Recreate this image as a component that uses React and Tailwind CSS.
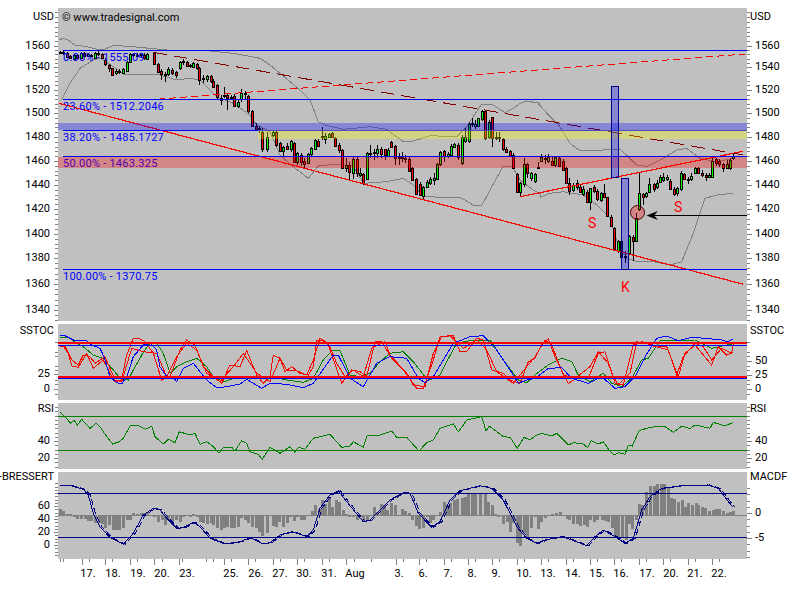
import React from 'react';

// zoomed-crop coordinates -> page coordinates
const toPage = (ox, oy, list) => list.map(([x, y]) => [ox + x / 3, oy + y / 3]);
const line = (points) => points.map(([x, y]) => `${x.toFixed(1)},${y.toFixed(1)}`).join(' ');
const joined = (...parts) => line(parts.flat());

const candles = [
  ...[
    [181,155,160,152,163,'g'],[190,156,160,153,164,'g'],[201,160,170,156,174,'r'],[211,168,175,165,178,'r'],[222,165,176,162,178,'g'],[232,165,175,163,178,'r'],[243,160,175,157,178,'g'],[252,158,167,155,172,'r'],[263,163,167,160,170,'g'],[274,165,168,162,172,'g'],[285,160,175,157,178,'g'],[295,158,163,154,168,'g'],[307,163,175,160,178,'r'],[316,180,193,175,197,'r'],[328,195,205,192,215,'r'],[337,205,224,203,227,'r'],[348,214,218,208,224,'g'],[358,214,217,208,222,'g'],[370,207,218,204,222,'g'],[380,186,212,184,216,'g'],[390,162,186,158,190,'g'],[400,162,165,158,170,'g'],[411,164,166,160,172,'g'],[422,162,165,158,170,'g'],[433,165,175,160,180,'r'],[442,163,177,160,180,'g'],[463,160,192,155,196,'r'],[474,192,215,188,220,'r'],[484,212,222,208,240,'r'],[495,222,224,215,245,'g'],[505,206,222,202,228,'g'],[517,210,220,205,225,'r'],[527,215,225,212,233,'r'],[540,187,205,183,210,'g'],[549,184,187,178,195,'g'],[560,186,197,182,200,'r'],[570,196,199,192,205,'g'],[580,188,200,185,205,'g'],[590,192,205,190,210,'r'],[598,203,240,200,255,'r'],[610,234,237,225,250,'g'],[620,229,238,225,245,'g'],[632,228,242,225,250,'r'],[640,242,260,238,265,'r'],[652,256,292,253,298,'r'],[662,295,300,285,316,'g'],[672,285,288,260,295,'g'],[682,285,295,280,330,'r'],[692,290,292,285,298,'g'],[702,288,318,283,320,'r'],[714,305,318,300,325,'g'],[724,280,296,268,305,'g'],[736,278,282,272,298,'g'],[745,288,333,285,340,'r'],[757,333,378,330,382,'r'],[767,378,386,370,390,'r'],[778,385,388,378,400,'g'],[787,395,447,385,455,'r'],[800,410,447,395,455,'g'],
  ].map((c) => [c[0] / 3, c[1] / 3, c[2] / 3, c[3] / 3, c[4] / 3, c[5]]),
  ...[
    [8,127,135,120,140,'g'],[19,127,165,120,170,'r'],[30,160,182,155,185,'r'],[40,172,182,168,200,'g'],[52,168,176,160,180,'r'],[62,154,176,150,185,'g'],[73,160,215,155,220,'r'],[82,190,217,185,225,'g'],[94,194,215,190,228,'r'],[103,212,222,205,235,'r'],[114,192,220,190,222,'g'],[124,175,193,170,200,'g'],[135,150,177,148,180,'g'],[145,153,167,148,170,'r'],[157,138,142,110,150,'g'],[166,138,147,130,162,'g'],[178,133,142,128,145,'g'],[187,129,142,125,145,'r'],[196,143,167,140,170,'r'],[208,166,179,160,190,'r'],[217,181,233,178,236,'r'],[228,224,233,205,245,'g'],[238,226,245,215,270,'r'],[249,208,250,200,268,'g'],[260,208,250,200,262,'r'],[270,250,254,235,262,'g'],[280,253,278,248,285,'r'],[292,190,266,185,270,'g'],[301,190,193,165,205,'g'],[312,186,190,178,210,'g'],[322,178,188,165,205,'g'],[333,178,193,170,205,'r'],[344,178,196,178,210,'r'],[355,181,197,175,200,'g'],[364,156,171,152,175,'r'],[376,168,205,165,225,'r'],[386,201,205,190,225,'g'],[396,201,205,185,215,'g'],[406,203,207,195,220,'g'],[418,208,242,200,245,'r'],[427,235,270,230,272,'r'],[439,268,311,265,315,'r'],[449,282,316,275,318,'r'],[460,292,319,288,330,'g'],[470,277,290,270,295,'g'],[481,268,278,262,285,'g'],[491,264,269,248,285,'g'],[502,222,268,218,270,'g'],[511,187,221,183,228,'g'],[523,184,197,180,215,'r'],[533,193,198,185,205,'g'],[544,168,195,162,198,'g'],[553,163,170,158,175,'g'],[565,165,202,160,210,'r'],[575,142,218,135,225,'g'],[585,142,154,115,158,'g'],[596,103,154,95,158,'g'],[606,100,103,85,112,'g'],[616,103,107,90,118,'g'],[625,85,107,83,110,'g'],[636,63,88,60,92,'g'],[646,63,145,60,150,'r'],[657,96,140,90,148,'g'],[667,82,145,80,170,'r'],[678,141,145,125,150,'g'],[688,141,145,125,155,'g'],[700,146,178,143,182,'r'],[708,178,187,172,190,'r'],[720,183,197,180,200,'r'],[730,195,233,188,236,'r'],[741,253,305,250,308,'r'],[750,280,305,275,318,'g'],[762,223,283,205,290,'g'],[772,223,250,220,265,'r'],[783,250,265,245,272,'g'],[794,253,272,248,280,'g'],
  ].map((c) => [270 + c[0] / 3, 90 + c[1] / 3, 90 + c[2] / 3, 90 + c[3] / 3, 90 + c[4] / 3, c[5]]),
  ...[
    [25,232,235,215,238,'g'],[33,200,213,193,215,'g'],[44,205,208,195,222,'g'],[54,202,213,192,218,'g'],[66,212,226,200,228,'r'],[76,202,226,198,230,'g'],[88,204,228,200,232,'r'],[98,212,240,208,243,'r'],[109,235,278,232,280,'r'],[118,280,302,265,315,'r'],[129,285,300,278,305,'g'],[140,280,292,270,300,'r'],[151,290,305,285,310,'r'],[160,298,312,288,318,'g'],[172,307,335,300,340,'r'],[181,295,335,293,360,'g'],[193,290,302,285,310,'r'],[202,303,326,298,332,'r'],[214,310,330,307,335,'g'],[222,310,322,282,325,'r'],[232,322,378,320,382,'r'],[243,382,408,375,412,'r'],[253,415,476,412,480,'r'],[265,454,484,450,488,'g'],[274,454,500,450,505,'g'],[286,498,502,482,520,'g'],[296,438,488,435,492,'g'],[308,440,452,435,512,'r'],[317,385,452,370,455,'g'],[328,310,358,248,362,'g'],[338,312,320,310,345,'r'],[348,310,318,305,325,'g'],[358,282,306,265,310,'g'],[371,282,296,278,305,'r'],[380,278,292,270,296,'g'],[389,262,276,255,280,'g'],[400,262,270,248,276,'g'],[410,262,266,255,272,'g'],[420,272,298,268,300,'r'],[432,298,312,292,318,'r'],[442,295,310,290,318,'g'],[453,250,296,243,302,'g'],[463,253,266,250,270,'r'],[474,266,270,262,282,'g'],[484,258,266,250,272,'g'],[495,234,250,230,252,'g'],[505,234,248,232,252,'r'],[516,248,254,240,260,'r'],[527,254,260,248,272,'r'],[537,254,260,250,264,'g'],[547,212,260,205,262,'g'],[558,208,220,204,228,'r'],[568,212,222,208,232,'r'],[579,222,235,218,245,'r'],[590,222,234,210,238,'g'],[601,210,235,205,240,'g'],[610,198,204,192,210,'g'],
  ].map((c) => [530 + c[0] / 3, 90 + c[1] / 3, 90 + c[2] / 3, 90 + c[3] / 3, 90 + c[4] / 3, c[5]]),
];

const upperBand = joined(
  toPage(0, 0, [[177,120],[190,115],[205,120],[225,135],[260,140],[290,148],[310,150],[340,136],[400,140],[500,150],[600,150],[700,160],[780,175],[810,195]]),
  toPage(270, 90, [[90,0],[120,30],[145,95],[165,105],[220,118],[300,110],[350,118],[400,155],[430,153],[480,137],[560,140],[590,110],[635,42],[665,42],[705,68],[730,55],[750,40],[770,33],[810,40]]),
  toPage(530, 90, [[20,35],[60,80],[90,110],[120,160],[150,183],[270,178],[295,200],[320,225],[350,230],[400,205],[440,180],[470,175],[510,205],[560,215],[610,205]]),
);
const lowerBand = joined(
  toPage(0, 0, [[185,300],[210,250],[240,205],[280,180],[300,175],[340,200],[370,222],[470,222],[530,240],[570,235],[600,240],[650,290],[700,310],[750,345],[770,375],[810,395]]),
  toPage(270, 90, [[30,195],[70,230],[115,265],[145,228],[200,222],[250,228],[280,280],[350,275],[400,265],[430,285],[460,320],[530,322],[570,322],[610,345],[635,347],[660,300],[700,228],[725,228],[750,270],[790,300],[810,310]]),
  toPage(530, 90, [[30,322],[60,310],[100,305],[160,315],[200,345],[240,385],[262,455],[290,505],[320,515],[370,515],[420,525],[455,515],[490,430],[525,325],[560,315],[610,310]]),
);

const ssBlue = joined(
  toPage(0, 320, [[180,47],[195,47],[225,62],[260,62],[275,75],[300,85],[312,110],[330,170],[350,188],[365,192],[380,170],[400,110],[430,75],[452,70],[470,90],[480,140],[500,170],[520,172],[530,185],[550,145],[580,130],[600,155],[620,180],[650,203],[680,200],[720,192],[740,178],[760,190],[785,205],[810,190]]),
  toPage(270, 320, [[50,193],[100,203],[130,190],[165,140],[190,105],[205,105],[240,175],[280,200],[320,130],[360,110],[410,115],[445,175],[465,188],[490,170],[550,70],[600,50],[640,47],[680,90],[720,150],[745,190],[770,180],[795,175]]),
  toPage(535, 320, [[40,145],[80,143],[110,175],[160,190],[200,170],[240,205],[270,200],[300,170],[330,110],[365,55],[395,48],[430,62],[470,52],[510,55],[560,60],[575,65],[595,58]]),
);
const ssGreen = joined(
  toPage(0, 320, [[180,52],[205,52],[230,70],[250,80],[280,105],[310,115],[340,150],[360,175],[385,180],[400,150],[420,115],[430,97],[450,70],[470,70],[490,100],[510,160],[530,140],[560,125],[590,115],[620,140],[640,170],[670,185],[720,170],[760,170],[810,170]]),
  toPage(270, 320, [[50,180],[100,187],[130,175],[160,120],[190,90],[210,92],[240,165],[270,170],[300,160],[330,125],[360,100],[400,95],[430,125],[465,170],[480,180],[510,165],[530,125],[560,70],[600,62],[660,60],[700,120],[745,180],[770,188],[795,165]]),
  toPage(535, 320, [[40,135],[80,115],[110,125],[130,165],[165,185],[205,160],[230,190],[260,200],[290,175],[320,120],[340,115],[375,62],[410,62],[480,60],[530,85],[590,72]]),
);
const ssRedA = joined(
  toPage(0, 320, [[190,78],[205,100],[215,138],[235,142],[260,100],[280,145],[310,120],[330,160],[345,185],[365,180],[380,105],[400,55],[420,57],[435,65],[460,100],[485,180],[510,170],[540,90],[560,60],[585,75],[610,140],[640,170],[665,190],[690,135],[720,140],[740,92],[770,165],[790,190],[810,170]]),
  toPage(270, 320, [[10,105],[30,115],[45,155],[65,140],[90,160],[115,165],[130,140],[140,60],[155,60],[175,75],[215,190],[245,150],[270,155],[290,170],[315,65],[335,65],[365,115],[400,150],[440,205],[460,205],[490,120],[510,50],[550,47],[570,95],[590,95],[620,55],[640,60],[665,150],[700,160],[720,180],[750,190],[775,125],[795,115]]),
  toPage(535, 320, [[20,75],[40,57],[60,110],[100,190],[135,170],[160,175],[190,100],[210,95],[235,170],[250,195],[285,160],[305,65],[330,70],[370,78],[395,80],[430,170],[450,100],[480,75],[530,135],[550,80],[575,105],[595,95]]),
);
const ssRedB = joined(
  toPage(0, 320, [[180,78],[195,78],[215,120],[235,135],[250,105],[270,110],[285,130],[315,110],[345,180],[365,185],[395,85],[430,95],[470,100],[500,170],[530,110],[560,70],[590,90],[620,160],[660,185],[700,140],[730,100],[770,160],[810,185]]),
  toPage(270, 320, [[30,115],[50,150],[75,150],[110,165],[130,120],[150,55],[175,70],[200,130],[225,170],[250,150],[280,170],[305,85],[345,65],[360,105],[410,160],[430,195],[465,200],[490,100],[515,50],[540,47],[580,85],[620,60],[650,90],[680,155],[730,190],[770,140],[795,110]]),
  toPage(535, 320, [[30,60],[50,75],[85,165],[120,175],[165,140],[190,95],[220,130],[240,190],[265,195],[295,75],[320,65],[355,78],[400,90],[425,165],[445,110],[480,70],[505,80],[530,120],[560,85],[590,100],[595,70]]),
);

const rsi = joined(
  toPage(0, 320, [[180,277],[195,290],[212,310],[222,300],[232,315],[245,298],[270,325],[288,310],[300,320],[320,350],[338,372],[358,365],[370,355],[390,318],[415,317],[437,328],[455,318],[465,350],[490,372],[505,358],[525,368],[538,335],[570,345],[585,340],[600,373],[620,365],[640,380],[657,400],[670,382],[695,382],[705,393],[725,362],[740,370],[750,395],[775,403],[787,418],[810,382]]),
  toPage(270, 320, [[30,400],[60,380],[75,397],[85,382],[105,388],[130,355],[180,343],[215,382],[240,378],[250,365],[280,382],[292,345],[330,345],[365,333],[380,352],[410,352],[447,393],[470,368],[490,360],[510,325],[550,312],[565,335],[580,315],[590,300],[635,290],[648,333],[658,318],[700,350],[720,352],[742,385],[762,352],[780,360],[800,345]]),
  toPage(535, 320, [[20,340],[50,348],[65,340],[100,375],[115,368],[145,372],[158,383],[168,362],[190,372],[205,365],[222,390],[238,405],[250,398],[270,403],[280,375],[292,378],[312,332],[345,322],[365,320],[390,320],[415,337],[440,318],[465,326],[480,315],[525,325],[535,307],[570,318],[595,307]]),
);

const macd = joined(
  toPage(0, 320, [[180,495],[205,495],[250,508],[265,525],[280,580],[300,620],[330,653],[370,673],[400,640],[430,585],[460,565],[480,570],[500,595],[530,625],[550,623],[580,607],[600,620],[630,655],[675,672],[720,665],[750,653],[790,672],[810,668]]),
  toPage(270, 320, [[30,645],[65,635],[110,650],[130,630],[150,565],[180,525],[205,512],[230,545],[280,605],[300,600],[360,540],[400,518],[420,520],[445,580],[485,622],[510,605],[540,540],[570,512],[630,497],[665,505],[700,540],[740,620],[770,655],[800,670]]),
  toPage(535, 320, [[30,660],[80,650],[110,660],[155,677],[180,650],[205,630],[240,650],[270,670],[295,655],[320,570],[345,530],[380,505],[450,496],[520,495],[550,505],[580,545],[595,562]]),
);

const histogram = [
  ...toPage(0, 320, [[181,567],[190,572],[200,582],[211,582],[222,590],[232,598],[243,598],[254,596],[264,604],[274,602],[285,610],[296,608],[307,612],[316,625],[327,615],[338,630],[348,630],[358,630],[370,625],[380,600],[390,600],[400,580],[410,582],[422,580],[433,578],[442,575],[463,590],[474,605],[485,600],[495,615],[505,600],[517,615],[527,600],[540,605],[549,590],[560,588],[570,590],[580,582],[590,590],[600,605],[610,610],[620,612],[632,608],[640,615],[652,625],[662,630],[672,625],[682,620],[692,625],[702,625],[714,620],[724,595],[736,600],[745,610],[757,620],[767,625],[778,635],[787,648],[800,640]]),
  ...toPage(270, 320, [[8,618],[18,620],[28,605],[40,620],[50,610],[60,590],[72,603],[82,592],[92,600],[103,600],[125,573],[135,555],[146,568],[156,540],[166,552],[176,535],[186,560],[197,540],[208,545],[218,570],[228,583],[238,590],[250,592],[260,600],[271,592],[280,602],[290,602],[300,585],[311,560],[322,575],[332,552],[342,555],[352,570],[362,550],[376,555],[386,585],[396,568],[406,572],[416,580],[426,600],[437,618],[447,628],[458,625],[470,590],[480,610],[490,600],[500,585],[511,575],[521,545],[531,555],[541,550],[552,540],[562,538],[575,535],[584,530],[595,520],[605,520],[615,520],[630,520],[645,520],[655,545],[665,555],[675,583],[685,592],[700,612],[710,605],[720,635],[730,610],[741,670],[750,678],[762,640],[772,652],[783,625],[794,590]]),
  ...toPage(535, 320, [[8,627],[18,605],[30,595],[50,582],[62,578],[75,575],[95,597],[103,600],[115,612],[125,612],[135,618],[146,615],[156,620],[166,600],[176,605],[187,600],[200,600],[210,602],[218,605],[230,625],[240,652],[250,655],[262,655],[272,660],[282,612],[292,628],[302,600],[312,552],[322,555],[333,515],[345,497],[356,497],[365,493],[378,493],[387,493],[398,505],[408,535],[418,538],[430,545],[440,540],[450,560],[460,550],[470,555],[482,550],[490,555],[500,560],[510,565],[522,573],[533,570],[544,568],[552,568],[565,573],[575,580],[585,575],[595,573]]),
];

const priceLabels = [['1560',46],['1540',67],['1520',90],['1500',113],['1480',137],['1460',161],['1440',185],['1420',209],['1400',234],['1380',258],['1360',284],['1340',310]];
const dateLabels = [['17.',88],['18.',113],['19.',138],['20.',162],['23.',187],['25.',231],['26.',256],['27.',280],['30.',304],['31.',329],['Aug',355],['3.',399],['6.',423],['7.',448],['8.',472],['9.',496],['10.',524],['13.',548],['14.',573],['15.',597],['16.',621],['17.',647],['20.',671],['21.',695],['22.',719]];
const dateTicks = [82,105,130,154,179,224,248,273,297,322,346,396,419,444,468,492,517,541,566,590,614,639,663,688,712];
const minorDateTicks = [60,63,89,112,137,162,182,206,213,231,255,280,304,329,354,371,403,426,451,475,499,524,548,573,597,621,646,670,695,719];

// interpolate the small axis marks between the labelled ones
const axisMarks = (majors, top, bottom, parts) => {
  const ys = [...majors].sort((a, b) => a - b);
  const step = (ys[ys.length - 1] - ys[0]) / (ys.length - 1) / parts;
  const marks = [];
  for (let y = ys[0] - step; y > top; y -= step) marks.push(y);
  for (let i = 0; i < ys.length - 1; i++) {
    for (let k = 1; k < parts; k++) marks.push(ys[i] + ((ys[i + 1] - ys[i]) * k) / parts);
  }
  for (let y = ys[ys.length - 1] + step; y < bottom; y += step) marks.push(y);
  return marks;
};

// one chart pane: the drawing, plus whatever lies over it (notes, shaded bands)
const Panel = ({ top, height, overlay, children }) => (
  <div className="relative w-[689px] shrink-0 overflow-hidden bg-[#c0c0c0]" style={{ height }}>
    <svg className="absolute inset-0" width="689" height={height} viewBox={`58 ${top} 689 ${height}`} shapeRendering="crispEdges">
      {children}
    </svg>
    {overlay}
  </div>
);

const Axis = ({ side, top, height, title, titleY, labels, marks }) => {
  const left = side === 'left';
  return (
    <div className="relative w-[58px] shrink-0" style={{ height }}>
      <svg className="absolute inset-0" width="58" height={height} viewBox={`0 ${top} 58 ${height}`}>
        {labels.map(([, y]) => (
          <line key={y} x1={left ? 54 : 0} x2={left ? 58 : 5} y1={Math.round(y) + 0.5} y2={Math.round(y) + 0.5} stroke="#808080" />
        ))}
        {marks.map((y) => (
          <line key={y} x1={left ? 55 : 0} x2={left ? 58 : 3} y1={Math.round(y) + 0.5} y2={Math.round(y) + 0.5} stroke="#808080" />
        ))}
      </svg>
      <span className={`absolute leading-none whitespace-nowrap ${left ? 'right-[4px]' : 'left-[3px]'}`} style={{ top: titleY - top - 6 }}>
        {title}
      </span>
      {labels.map(([text, y]) => (
        <span key={text} className={`absolute leading-none ${left ? 'right-[8px]' : 'left-[8px]'}`} style={{ top: y - top - 6 }}>
          {text}
        </span>
      ))}
    </div>
  );
};

const Row = ({ top, height, leftAxis, rightAxis, children }) => (
  <div className="flex">
    <Axis side="left" top={top} height={height} {...leftAxis} />
    {children}
    <Axis side="right" top={top} height={height} {...rightAxis} />
  </div>
);

const pricePanel = { labels: priceLabels, marks: axisMarks(priceLabels.map((p) => p[1]), 8, 321, 5), title: 'USD', titleY: 17 };

const Fib = ({ y, children }) => (
  <span className="absolute left-[5px] leading-none tracking-[0.25px] whitespace-nowrap text-[#0000ff]" style={{ top: y - 8 - 6 }}>
    {children}
  </span>
);

// labels lie under the shaded bands, so the bands come after them
const priceOverlay = (
  <>
    <span className="absolute left-[4px] top-[4px] leading-none">© www.tradesignal.com</span>
    <Fib y={58}>0.00% - 1555.09</Fib>
    <Fib y={107}>23.60% - 1512.2046</Fib>
    <Fib y={138}>38.20% - 1485.1727</Fib>
    <Fib y={164}>50.00% - 1463.325</Fib>
    <Fib y={277}>100.00% - 1370.75</Fib>
    <div className="absolute inset-x-0 top-[115px] h-[7px] bg-[#0000ff]/30" />
    <div className="absolute left-[200px] right-0 top-[122px] h-[9px] bg-[#ffff00]/30" />
    <div className="absolute inset-x-0 top-[149px] h-[11px] bg-[#ff0000]/30" />
    <div className="absolute left-[553px] top-[78px] h-[92px] w-[8px] border border-[#000080] bg-[#0000ff]/30" />
    <div className="absolute left-[563px] top-[170px] h-[92px] w-[8px] border border-[#000080] bg-[#0000ff]/30" />
    <div className="absolute left-[572px] top-[197px] h-[15px] w-[15px] rounded-full border border-[#400000] bg-[#ff0000]/30" />
    <svg className="absolute inset-0" width="689" height="313" viewBox="58 8 689 313">
      <line x1="650" y1="215.5" x2="747" y2="215.5" stroke="#000" />
      <path d="M646.5 215.5 L658 211 L654 215.5 L658 220 Z" fill="#000" />
    </svg>
    <span className="absolute left-[530px] top-[208px] text-[14px] leading-none text-[#ff0000]">S</span>
    <span className="absolute left-[616px] top-[192px] text-[14px] leading-none text-[#ff0000]">S</span>
    <span className="absolute left-[563px] top-[272px] text-[14px] leading-none text-[#ff0000]">K</span>
  </>
);

export default function App() {
  return (
    <div className="flex min-h-[591px] w-[805px] flex-col gap-[3px] overflow-hidden bg-white pt-2 font-['Roboto',sans-serif] text-[11px] text-black">
      <Row top={8} height={313} leftAxis={pricePanel} rightAxis={pricePanel}>
        <Panel top={8} height={313} overlay={priceOverlay}>
          {/* bollinger bands */}
          <polyline points={upperBand} fill="none" stroke="#808080" />
          <polyline points={lowerBand} fill="none" stroke="#808080" />
          {/* candles */}
          {candles.map(([x, top, bottom, high, low, kind]) => {
            const cx = Math.round(x);
            const y = Math.round(top);
            const h = Math.max(1, Math.round(bottom) - y);
            return (
              <g key={x}>
                <line x1={cx + 0.5} x2={cx + 0.5} y1={high} y2={low} stroke="#000" />
                <rect x={cx - 0.5} y={y + 0.5} width="2" height={h} fill={kind === 'r' ? '#ff0000' : '#00ff00'} stroke="#000" />
              </g>
            );
          })}
          {/* trend lines */}
          <line x1="59" y1="103.3" x2="743.3" y2="284.3" stroke="#ff0000" strokeWidth="1.2" />
          <line x1="520" y1="196.7" x2="743.3" y2="151.3" stroke="#ff0000" strokeWidth="1.2" />
          <line x1="153" y1="52.3" x2="743.3" y2="155" stroke="#800000" strokeDasharray="14 7" />
          <line x1="147" y1="100" x2="745" y2="54" stroke="#ff0000" strokeDasharray="7 4" />
          {/* fibonacci levels */}
          {[50.5, 99.5, 130.5, 156.5, 269.5].map((y) => (
            <line key={y} x1="63" x2="747" y1={y} y2={y} stroke="#0000ff" />
          ))}
        </Panel>
      </Row>

      <Row
        top={324}
        height={76}
        leftAxis={{ title: 'SSTOC', titleY: 331, labels: [['25',374],['0',389]], marks: axisMarks([347,361,375,389], 338, 398, 3) }}
        rightAxis={{ title: 'SSTOC', titleY: 331, labels: [['50',361],['25',375],['0',389]], marks: axisMarks([347,361,375,389], 338, 398, 3) }}
      >
        <Panel top={324} height={76}>
          <polyline points={ssGreen} fill="none" stroke="#008000" />
          <polyline points={ssRedB} fill="none" stroke="#ff0000" />
          <polyline points={ssRedA} fill="none" stroke="#ff0000" />
          <polyline points={ssBlue} fill="none" stroke="#0000ff" />
          <line x1="58" x2="747" y1="343" y2="343" stroke="#ff0000" strokeWidth="2" />
          <line x1="58" x2="747" y1="345.5" y2="345.5" stroke="#0000ff" />
          <line x1="58" x2="747" y1="377" y2="377" stroke="#ff0000" strokeWidth="2" />
          <line x1="58" x2="747" y1="378.5" y2="378.5" stroke="#0000ff" />
        </Panel>
      </Row>

      <Row
        top={403}
        height={66}
        leftAxis={{ title: 'RSI', titleY: 409, labels: [['40',441],['20',458]], marks: axisMarks([441,458], 405, 468, 4) }}
        rightAxis={{ title: 'RSI', titleY: 409, labels: [['40',441],['20',458]], marks: axisMarks([441,458], 405, 468, 4) }}
      >
        <Panel top={403} height={66}>
          <line x1="58" x2="747" y1="416.5" y2="416.5" stroke="#008000" />
          <line x1="58" x2="747" y1="450.5" y2="450.5" stroke="#008000" />
          <polyline points={rsi} fill="none" stroke="#008000" />
        </Panel>
      </Row>

      <Row
        top={472}
        height={87}
        leftAxis={{ title: '-BRESSERT', titleY: 477, labels: [['60',506],['40',519],['20',532],['0',545]], marks: axisMarks([506,519,532,545], 482, 558, 4) }}
        rightAxis={{ title: 'MACDF', titleY: 477, labels: [['0',513],['-5',538]], marks: axisMarks([513,538], 482, 558, 4) }}
      >
        <Panel top={472} height={87}>
          {histogram.map(([x, y]) => (
            <rect key={x} x={Math.round(x) - 1} width="3" y={Math.min(y, 515)} height={Math.abs(y - 515)} fill="#808080" />
          ))}
          <line x1="58" x2="747" y1="515.5" y2="515.5" stroke="#808080" />
          <line x1="58" x2="747" y1="493.5" y2="493.5" stroke="#000080" />
          <line x1="58" x2="747" y1="537.5" y2="537.5" stroke="#000080" />
          <polyline points={macd} fill="none" stroke="#000080" />
          <polyline points={macd} fill="none" stroke="#000080" strokeDasharray="6 3" transform="translate(2 0)" />
        </Panel>
      </Row>

      {/* date axis */}
      <div className="relative -mt-[3px] h-8">
        <svg className="absolute inset-0" width="805" height="32" viewBox="0 559 805 32">
          {dateTicks.map((x) => (
            <line key={x} x1={x + 0.5} x2={x + 0.5} y1="559" y2="565" stroke="#808080" />
          ))}
          {minorDateTicks.map((x) => (
            <line key={x} x1={x + 0.5} x2={x + 0.5} y1="559" y2="562" stroke="#808080" />
          ))}
        </svg>
        {dateLabels.map(([text, x]) => (
          <span key={x} className="absolute top-[9px] -translate-x-1/2 leading-none" style={{ left: x }}>
            {text}
          </span>
        ))}
      </div>
    </div>
  );
}
